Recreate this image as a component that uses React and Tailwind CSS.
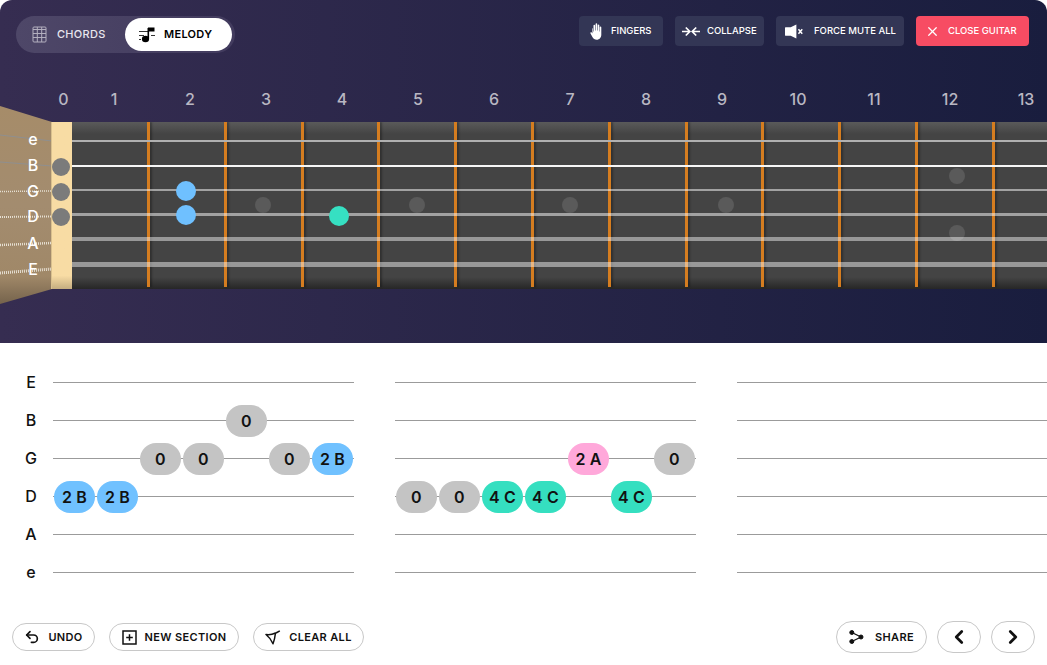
import React from "react";
import { X, Undo2, ChevronLeft, ChevronRight } from "lucide-react";

const FONT = "font-['Inter','Liberation_Sans',sans-serif]";
const strings = [
  "top-[18px] h-[2px] bg-[#b0b0b0]",
  "top-[43px] h-[2px] bg-[#f6f6f6]",
  "top-[67px] h-[2px] bg-white/50",
  "top-[91px] h-[3px] bg-white/50",
  "top-[115px] h-[4px] bg-white/45",
  "top-[140px] h-[5px] bg-white/45",
];

function ChordIcon() {
  return (
    <svg width="15" height="17" viewBox="0 0 15 17" fill="none" stroke="#b3afbf" strokeWidth="1">
      <rect x="1" y="1" width="13" height="15" rx="1" />
      <path d="M1 3.5h13M1 7.5h13M1 11.5h13M5.3 1v15M9.7 1v15" />
    </svg>
  );
}
function MelodyIcon() {
  return (
    <svg width="17" height="16" viewBox="0 0 17 16" fill="none">
      <path d="M0 4.5h9M0 8.5h5M12 8.5h4M0 12.5h2" stroke="#333" strokeWidth="1" />
      <ellipse cx="6.5" cy="12" rx="3.6" ry="3.3" fill="#000" />
      <path d="M9.3 12V1" stroke="#000" strokeWidth="1.6" />
      <path d="M9 0.5h6.5v4H9z" fill="#000" />
    </svg>
  );
}
function HandIcon() {
  return (
    <svg width="14" height="17" viewBox="0 0 14 17" fill="#fff">
      <path d="M2.2 5.2c.5 0 .8.3.8.8v2.5h.5V2.6c0-.5.4-.8.8-.8s.8.3.8.8v5h.5V1c0-.5.4-.8.8-.8s.8.3.8.8v6.6h.5V2.2c0-.5.4-.8.8-.8s.8.3.8.8v6.4h.4V4.4c0-.5.3-.8.8-.8s.8.3.8.8v7.4c0 2.8-1.9 5-4.6 5-2 0-3.2-.9-4.3-2.7L.5 10.5c-.3-.5-.1-1 .3-1.2.4-.2.8-.1 1 .3l.6 1V6c0-.5-.6-.8-.2-.8z" />
    </svg>
  );
}
function CollapseIcon() {
  return (
    <svg width="18" height="11" viewBox="0 0 18 11" fill="none" stroke="#fff" strokeWidth="1.7">
      <path d="M0 5.5h7M3.800 1.5 7.800 5.5 3.800 9.5M18 5.5h-7M14.200 1.5 10.200 5.5 14.200 9.5" />
    </svg>
  );
}
function MuteIcon() {
  return (
    <svg width="19" height="15" viewBox="0 0 19 15" fill="#fff">
      <path d="M0 3.5Q0 3 .5 3H6L12 0v15L6 12H.5Q0 12 0 11.5z" />
      <path d="M14.2 5.200l4 4.600M18.200 5.200l-4 4.600" stroke="#fff" strokeWidth="1.6" fill="none" />
    </svg>
  );
}
function NewSectionIcon() {
  return (
    <svg width="15" height="15" viewBox="0 0 15 15" fill="none" stroke="#111" strokeWidth="1.5">
      <rect x="1" y="1" width="13" height="13" />
      <path d="M7.5 4.200v6.600M4.200 7.5h6.600" />
    </svg>
  );
}
function ClearIcon() {
  return (
    <svg width="16" height="15" viewBox="0 0 16 15" fill="none" stroke="#111" strokeWidth="1.5" strokeLinejoin="round">
      <path d="M1 4.5Q6 5.200 10.500 3 9.800 9 8 13.800 5.500 8 1 4.5z" />
      <path d="M11 3 14.800 .8" />
    </svg>
  );
}
function ShareIcon() {
  return (
    <svg width="15" height="14" viewBox="0 0 15 14" fill="#111" stroke="#111">
      <circle cx="2.800" cy="2.5" r="2" />
      <circle cx="2.800" cy="11.5" r="2" />
      <circle cx="12" cy="7" r="2" />
      <path d="M2.800 2.5 12 7 2.800 11.5" fill="none" strokeWidth="1.3" />
    </svg>
  );
}

function DarkButton({ icon, label, red, cls }) {
  return (
    <button className={`flex items-center h-[30px] rounded-[4px] text-[9.5px] font-medium text-white ${cls} ${red ? "bg-[#f74c63]" : "bg-[#333655]"}`}>
      <span className="flex justify-center items-center w-[18px]">{icon}</span>
      <span className="whitespace-nowrap">{label}</span>
    </button>
  );
}

function Peghead() {
  return (
    <svg className="absolute left-0 top-[-16px]" width="52" height="200" viewBox="0 0 52 200" fill="none">
      <defs>
        <linearGradient id="wood" x1="0" y1="0" x2="0" y2="1">
          <stop offset="0" stopColor="#a68c69" />
          <stop offset="0.5" stopColor="#a38c6f" />
          <stop offset="0.86" stopColor="#a08868" />
          <stop offset="1" stopColor="#75634c" />
        </linearGradient>
      </defs>
      <path d="M0 0 52 16V183L0 198z" fill="url(#wood)" />
      <path d="M0 29 52 35" stroke="#8f8f8f" strokeWidth="1" />
      <path d="M0 56 52 60" stroke="#8f8f8f" strokeWidth="1" />
      <path d="M0 85.5 52 85" stroke="#e6dfd2" strokeWidth="1.5" strokeDasharray="1 1" />
      <path d="M0 111 52 110.5" stroke="#e6dfd2" strokeWidth="2" strokeDasharray="1 1" />
      <path d="M0 139 52 137" stroke="#e6dfd2" strokeWidth="2.5" strokeDasharray="1 1" />
      <path d="M0 167 52 163" stroke="#e6dfd2" strokeWidth="3" strokeDasharray="1 1" />
    </svg>
  );
}

function Fretboard() {
  const dots = [
    "left-[183px] top-[75px]",
    "left-[337px] top-[75px]",
    "left-[490px] top-[75px]",
    "left-[646px] top-[75px]",
    "left-[877px] top-[46px]",
    "left-[877px] top-[103px]",
  ];
  return (
    <div className="relative h-[167px] mt-[13px]">
      <Peghead />
      <div className="absolute left-[51px] top-0 bottom-0 right-0 flex">
        <div className="w-[21px] shrink-0 border-l border-[#d9c08e] bg-gradient-to-b from-[#f8dca4] from-[92%] to-[#c4ad80]" />
        <div className="relative flex-1 bg-[#444444] overflow-hidden">
          <div className="absolute inset-x-0 top-0 h-[12px] bg-gradient-to-b from-[#5a5a5a] to-transparent" />
          <div className="absolute inset-x-0 bottom-0 h-[12px] bg-gradient-to-t from-[#262626] to-transparent" />
          <div className="absolute inset-0 flex pl-[75px]">
            {Array.from({ length: 12 }).map((_, i) => (
              <div key={i} className="w-[76.8px] shrink-0 h-[165px] relative">
                <div className="absolute left-0 top-0 bottom-0 w-[3px] bg-[#d57d20] shadow-[2px_0_2px_rgba(0,0,0,0.3)]" />
              </div>
            ))}
          </div>
          {dots.map((d) => (
            <div key={d} className={`absolute ${d} w-[16px] h-[16px] rounded-full bg-[#5a5a5a]`} />
          ))}
          {strings.map((s, i) => (
            <div key={i} className={`absolute inset-x-0 ${s}`} />
          ))}
        </div>
      </div>
      {["e", "B", "G", "D", "A", "E"].map((l, i) => (
        <span
          key={l + i}
          className={`absolute left-[27px] w-[12px] text-center text-[16px] leading-[20px] font-medium text-white ${["top-[7px]", "top-[33px]", "top-[59px]", "top-[84px]", "top-[111px]", "top-[137px]"][i]}`}
        >
          {l}
        </span>
      ))}
      {["top-[36px]", "top-[61px]", "top-[86px]"].map((t) => (
        <div key={t} className={`absolute left-[52px] ${t} w-[18px] h-[18px] rounded-full bg-[#7b7b7b]`} />
      ))}
      <div className="absolute left-[176px] top-[59px] w-[20px] h-[20px] rounded-full bg-[#6fc0ff]" />
      <div className="absolute left-[176px] top-[83px] w-[20px] h-[20px] rounded-full bg-[#6fc0ff]" />
      <div className="absolute left-[329px] top-[84px] w-[20px] h-[20px] rounded-full bg-[#36e0c2]" />
    </div>
  );
}

const colors = {
  g: "bg-[#c4c4c4]",
  b: "bg-[#70c1ff]",
  t: "bg-[#35dfc0]",
  p: "bg-[#ffa8da]",
};
const labels = ["E", "B", "G", "D", "A", "e"];
const bars = [
  {
    1: { 4: ["0", "g"] },
    2: { 2: ["0", "g"], 3: ["0", "g"], 5: ["0", "g"], 6: ["2 B", "b"] },
    3: { 0: ["2 B", "b"], 1: ["2 B", "b"] },
  },
  {
    2: { 4: ["2 A", "p"], 6: ["0", "g"] },
    3: { 0: ["0", "g"], 1: ["0", "g"], 2: ["4 C", "t"], 3: ["4 C", "t"], 5: ["4 C", "t"] },
  },
  {},
];

function Bar({ row, data, wide }) {
  const cells = data[row] || {};
  return (
    <div className={`relative h-[38px] flex items-center ${wide ? "flex-1" : "w-[301px]"} shrink-0`}>
      <div className="absolute inset-x-0 top-[18px] h-px bg-[#9b9b9b]" />
      <div className="relative grid grid-cols-[repeat(7,43px)] w-[301px]">
        {Array.from({ length: 7 }).map((_, i) => (
          <div key={i} className="h-[32px] flex justify-center">
            {cells[i] && (
              <div className={`w-[41px] h-[32px] rounded-[16px] flex items-center justify-center text-[16px] font-semibold tracking-[0.2px] text-[#111] ${colors[cells[i][1]]}`}>
                {cells[i][0]}
              </div>
            )}
          </div>
        ))}
      </div>
    </div>
  );
}

function LightButton({ icon, label, width, h, gap }) {
  return (
    <button className={`flex items-center justify-center rounded-full border border-[#c8c8c8] bg-white text-[11px] font-semibold tracking-[0.35px] text-[#111] ${width} ${h} ${gap}`}>
      {icon}
      {label && <span className="whitespace-nowrap">{label}</span>}
    </button>
  );
}

export default function App() {
  return (
    <div className={`w-[1047px] h-[665px] bg-white overflow-hidden ${FONT}`}>
      <header className="h-[343px] rounded-t-[12px] bg-gradient-to-r from-[#362d51] to-[#191d3e] overflow-hidden">
        <div className="flex items-start justify-between pt-[16px] pl-[16px] pr-[18px]">
          <div className="flex items-center w-[219px] h-[37px] rounded-full bg-gradient-to-r from-[#4e4768] to-[#423b5e] pl-[16px] pr-[3px]">
            <ChordIcon />
            <span className="ml-[10px] text-[11px] font-medium tracking-[0.3px] text-[#e8e6ee]">CHORDS</span>
            <div className="ml-auto flex items-center w-[107px] h-[33px] rounded-full bg-white pl-[14px] text-black">
              <MelodyIcon />
              <span className="ml-[8px] text-[11px] font-semibold tracking-[0.3px]">MELODY</span>
            </div>
          </div>
          <div className="flex gap-[12px]">
            <DarkButton icon={<HandIcon />} label="FINGERS" cls="w-[84px] pl-[9px] gap-[5px]" />
            <DarkButton icon={<CollapseIcon />} label="COLLAPSE" cls="w-[89px] pl-[7px] gap-[7px]" />
            <DarkButton icon={<MuteIcon />} label="FORCE MUTE ALL" cls="w-[128px] pl-[9px] gap-[11px]" />
            <DarkButton icon={<X size={15} strokeWidth={2} />} label="CLOSE GUITAR" cls="w-[113px] pl-[7px] gap-[7px]" red />
          </div>
        </div>
        <div className="flex mt-[36px] pl-[51px] h-[20px] text-[16px] leading-[20px] font-medium text-[#b9b7c2] overflow-hidden">
          <span className="w-[25px] shrink-0 text-center">0</span>
          {[1, 2, 3, 4, 5, 6, 7, 8, 9, 10, 11, 12, 13].map((n) => (
            <span key={n} className="w-[76px] shrink-0 text-center">{n}</span>
          ))}
        </div>
        <Fretboard />
      </header>

      <section className="pt-[21px]">
        {labels.map((l, row) => (
          <div key={l + row} className="flex h-[38px] gap-[41px] pl-[53px] relative">
            <span className="absolute left-[20px] w-[22px] top-[8px] text-center text-[16px] leading-[20px] font-medium text-[#111]">{l}</span>
            <Bar row={row} data={bars[0]} />
            <Bar row={row} data={bars[1]} />
            <Bar row={row} data={bars[2]} wide />
          </div>
        ))}
      </section>

      <footer className="flex items-center justify-between mt-[29px] pl-[12px] pr-[12px]">
        <div className="flex gap-[14px]">
          <LightButton icon={<Undo2 size={16} strokeWidth={2.5} color="#111" />} label="UNDO" width="w-[83px]" h="h-[28px]" gap="gap-[8px]" />
          <LightButton icon={<NewSectionIcon />} label="NEW SECTION" width="w-[130px]" h="h-[28px]" gap="gap-[8px]" />
          <LightButton icon={<ClearIcon />} label="CLEAR ALL" width="w-[111px]" h="h-[28px]" gap="gap-[8px]" />
        </div>
        <div className="flex gap-[10px]">
          <LightButton icon={<ShareIcon />} label="SHARE" width="w-[91px]" h="h-[32px]" gap="gap-[11px]" />
          <LightButton icon={<ChevronLeft size={22} strokeWidth={3} color="#111" />} width="w-[44px]" h="h-[32px]" />
          <LightButton icon={<ChevronRight size={22} strokeWidth={3} color="#111" />} width="w-[44px]" h="h-[32px]" />
        </div>
      </footer>
    </div>
  );
}
